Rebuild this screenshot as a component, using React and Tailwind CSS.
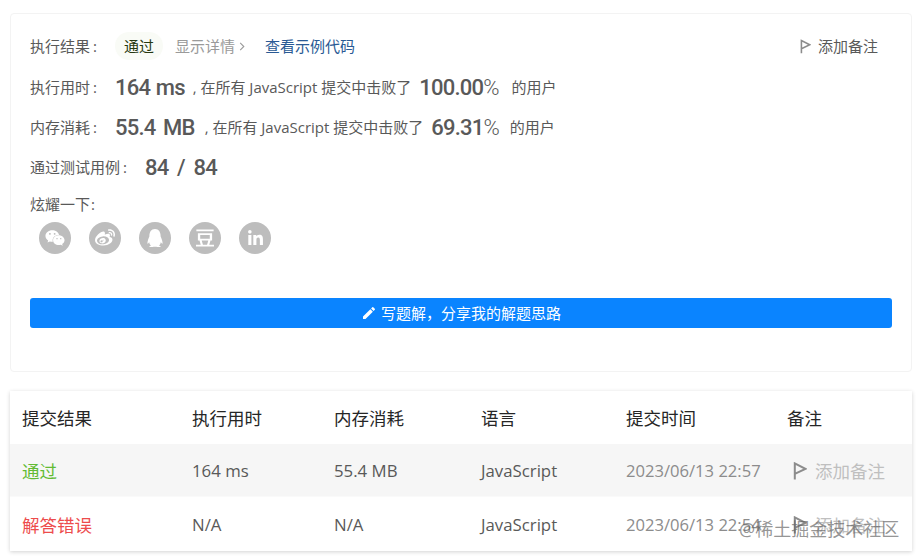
import { FaWeixin, FaWeibo, FaQq, FaLinkedinIn } from "react-icons/fa";
import { SiDouban } from "react-icons/si";
import { MdEdit } from "react-icons/md";

const cjk = "font-['Open_Sans','Noto_Sans_CJK_SC',sans-serif]";
const bigNum = "text-[22px] font-medium text-[#595959] font-['Roboto','Noto_Sans_CJK_SC',sans-serif] tracking-[-0.8px] whitespace-pre";

function Flag({ className, width = 2 }) {
  return (
    <svg viewBox="0 0 14 18" fill="none" stroke="currentColor" strokeWidth={width} className={className}>
      <path d="M1.8 17.5V1.4L12.4 6.8L1.8 11.8" />
    </svg>
  );
}

function Label({ children, className }) {
  return (
    <span className={`flex shrink-0 ${className}`}>
      {children}
      <span className="ml-[3px]">:</span>
    </span>
  );
}

function StatRow({ label, value, valueClass, rankClass, percent, userClass }) {
  return (
    <div className="flex items-center h-[40px] text-[15px] text-[#595959]">
      <Label className="w-[85px]">{label}</Label>
      <span className={`${bigNum} ${valueClass}`}>{value}</span>
      <span className={rankClass}>, 在所有 JavaScript 提交中击败了</span>
      <span className={`${bigNum} ml-[8px]`}>
        {percent}
        <span className="font-light">%</span>
      </span>
      <span className={userClass}>的用户</span>
    </div>
  );
}

const shareIcons = [
  { id: "wechat", icon: <FaWeixin size={20} /> },
  { id: "weibo", icon: <FaWeibo size={20} /> },
  { id: "qq", icon: <FaQq size={18} /> },
  { id: "douban", icon: <SiDouban size={18} /> },
  { id: "linkedin", icon: <FaLinkedinIn size={17} /> },
];

const rows = [
  {
    status: "通过",
    statusClass: "text-[#62bb33]",
    time: "164 ms",
    memory: "55.4 MB",
    date: "2023/06/13 22:57",
    rowClass: "bg-[#f6f6f6] h-[53px] border-b border-[#fafafa]",
  },
  {
    status: "解答错误",
    statusClass: "text-[#ed4c4c]",
    time: "N/A",
    memory: "N/A",
    date: "2023/06/13 22:54",
    rowClass: "bg-white h-[54px]",
  },
];

const gridCols = "grid grid-cols-[170px_142px_147px_145px_161px_1fr] items-center";

export default function App() {
  return (
    <div className={`relative w-[918px] h-[558px] overflow-hidden bg-white pl-[10px] pr-[6px] pt-[13px] ${cjk}`}>
      <div className="h-[359px] rounded border border-[#f3f3f3] px-[19px] pt-[12px]">
        <div className="flex items-center h-[40px] mb-[1px] text-[15px]">
          <Label className="w-[85px] text-[#595959]">执行结果</Label>
          <span className="w-[48px] h-[28px] flex items-center justify-center bg-[#f9fbf6] rounded-full text-[#26380f]">
            通过
          </span>
          <span className="ml-[12px] text-[#9a9a9a]">显示详情</span>
          <svg viewBox="0 0 6 10" fill="none" stroke="currentColor" strokeWidth="1.2" className="ml-[4px] w-[6px] h-[9px] text-[#9a9a9a]">
            <path d="M1 1l4 4-4 4" />
          </svg>
          <span className="ml-[20px] text-[#2a5a94]">查看示例代码</span>
          <span className="ml-auto mr-[14px] flex items-center gap-[7px] text-[#595959]">
            <Flag className="w-[11px] h-[15px] text-[#8c8c8c]" />
            添加备注
          </span>
        </div>
        <StatRow
          label="执行用时"
          value="164 ms"
          valueClass="[word-spacing:1px]"
          rankClass="ml-[8px]"
          percent="100.00"
          userClass="ml-[13px]"
        />
        <StatRow
          label="内存消耗"
          value="55.4 MB"
          valueClass="[word-spacing:3px]"
          rankClass="ml-[10px]"
          percent="69.31"
          userClass="ml-[11px]"
        />
        <div className="flex items-center h-[40px] text-[15px] text-[#595959]">
          <Label className="w-[115px]">通过测试用例</Label>
          <span className={`${bigNum} [word-spacing:4px]`}>84 / 84</span>
        </div>
        <div className="mt-[7px] text-[15px] leading-[20px] text-[#595959]">
          炫耀一下<span className="ml-[1px]">:</span>
        </div>
        <div className="flex gap-[18px] ml-[9px] mt-[8px]">
          {shareIcons.map((item) => (
            <div key={item.id} className="w-[32px] h-[32px] rounded-full bg-[#bdbdbd] text-white flex items-center justify-center">
              {item.icon}
            </div>
          ))}
        </div>
        <button className="mt-[44px] w-full h-[30px] rounded-[3px] bg-[#0a84ff] text-white text-[15px] flex items-center justify-center gap-[4px]">
          <MdEdit size={16} />
          写题解{"\uFF0C"}分享我的解题思路
        </button>
      </div>

      <div className="mt-[19px] shadow-[0_1px_4px_rgba(0,0,0,0.18)] text-[17.5px]">
        <div className={`${gridCols} h-[53px] pl-[12px] pt-[1px] text-[#262626]`}>
          <span>提交结果</span>
          <span>执行用时</span>
          <span>内存消耗</span>
          <span>语言</span>
          <span>提交时间</span>
          <span>备注</span>
        </div>
        {rows.map((row) => (
          <div key={row.date} className={`${gridCols} ${row.rowClass} pl-[12px] pt-[2px] text-[#595959]`}>
            <span className={row.statusClass}>{row.status}</span>
            <span className="text-[16.8px]">{row.time}</span>
            <span className="text-[16.8px]">{row.memory}</span>
            <span className="text-[16.8px]">JavaScript</span>
            <span className="text-[16.6px] text-[#8c8c8c]">{row.date}</span>
            <span className="flex items-center gap-[8px] pl-[6px] text-[#bfbfbf]">
              <Flag className="w-[14px] h-[18px] text-[#8c8c8c]" />
              添加备注
            </span>
          </div>
        ))}
      </div>

      {/* watermark */}
      <span className="absolute left-[739px] top-[516px] text-[18px] text-[#606060aa] whitespace-nowrap">
        @稀土掘金技术社区
      </span>
    </div>
  );
}
